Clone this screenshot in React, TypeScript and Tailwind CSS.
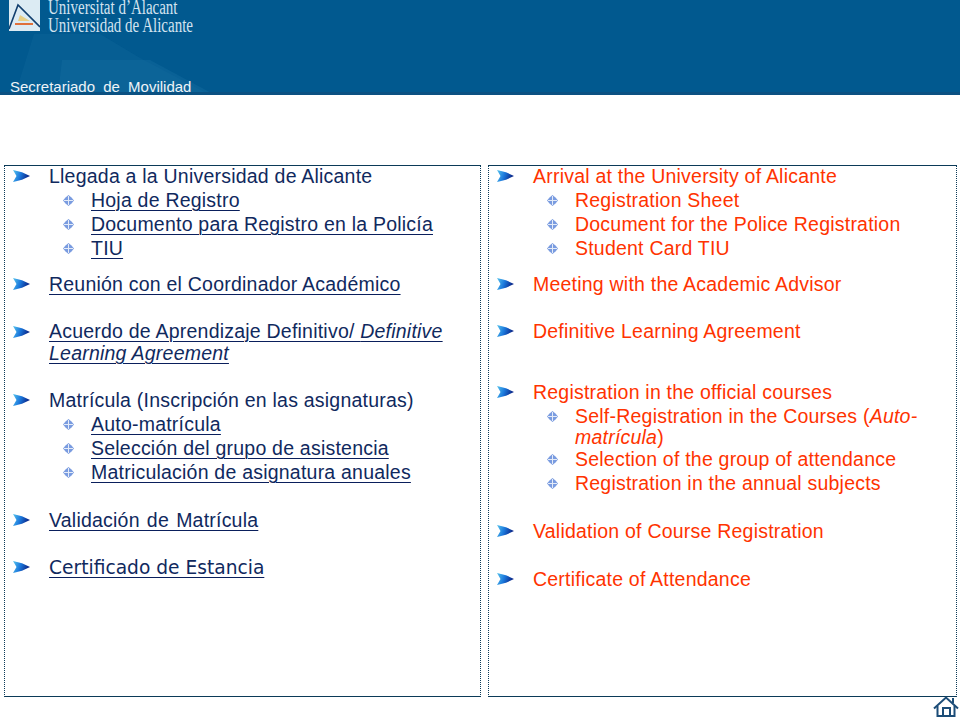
const Arrow = () => (
  <svg width="17" height="12" viewBox="0 0 17 12" className="shrink-0">
    <defs>
      <linearGradient id="ag" x1="0" y1="0" x2="1" y2="0.25">
        <stop offset="0" stopColor="#58c6ee" />
        <stop offset="0.5" stopColor="#1b78dc" />
        <stop offset="1" stopColor="#0a2486" />
      </linearGradient>
    </defs>
    <path d="M0 0 L9 2.2 L17 6 L9 9.8 L0 12 L3.5 6 Z" fill="url(#ag)" />
  </svg>
);

const Sub = () => (
  <svg width="11" height="11" viewBox="0 0 11 11" className="shrink-0">
    <path d="M5.5 0 L8.5 2.5 L11 5.5 L8.5 8.5 L5.5 11 L2.5 8.5 L0 5.5 L2.5 2.5 Z" fill="#7a9ce0" />
    <path d="M5.5 1 V10 M1 5.5 H10" stroke="#e4ebf8" strokeWidth="1" />
  </svg>
);

const L = ({ children }: { children: React.ReactNode }) => (
  <span className="underline underline-offset-[3px] decoration-1 decoration-[#0a1f5c]">{children}</span>
);

const Main = ({ children, className = "" }: { children: React.ReactNode; className?: string }) => (
  <div className={"flex items-start " + className}>
    <div className="w-[44px] pl-[8px] pt-[6px]"><Arrow /></div>
    <div className="flex-1 min-w-0 pr-[10px]">{children}</div>
  </div>
);

const SubRow = ({ children, className = "" }: { children: React.ReactNode; className?: string }) => (
  <div className={"flex items-start " + className}>
    <div className="w-[86px] pl-[58px] pt-[7px]"><Sub /></div>
    <div className="flex-1 min-w-0 pr-[10px]">{children}</div>
  </div>
);

export default function App() {
  return (
    <div className="w-[960px] h-[720px] bg-white overflow-hidden font-['Liberation_Sans',Arial,sans-serif] text-[19.5px] tracking-[0.22px] leading-6">
      <header className="h-[95px] relative overflow-hidden bg-[#00588f] tracking-normal">
        <svg className="absolute inset-0" width="960" height="95" viewBox="0 0 960 95">
          <rect width="960" height="95" fill="#01598f" />
          <path d="M15 95 L34 34 L100 34 L140 58 L210 95 Z" fill="#0b6398" opacity="0.55" />
          <path d="M58 95 L62 60 H150 L215 95 Z" fill="#1a6fa2" opacity="0.35" />
          <rect y="92" width="960" height="3" fill="#0b5182" />
        </svg>
        <div className="relative flex items-start pl-[9px]">
          <svg width="31" height="31" viewBox="0 0 31 31" className="shrink-0">
            <rect width="31" height="31" fill="#dcebf3" />
            <path d="M0 29 L9 5 L31 27" fill="none" stroke="#123f6e" strokeWidth="1.6" />
            <path d="M6 23 H24 V25 H6 Z" fill="#e0703a" />
            <path d="M11 15 L21 21 H9 Z" fill="#e8cf85" />
          </svg>
          <div className="ml-[8px] -mt-[2px] font-['Liberation_Serif',serif] text-[20px] leading-[18px] text-[#d3e3ef] origin-left scale-x-[0.75] whitespace-nowrap">
            <div>Universitat d’Alacant</div>
            <div>Universidad de Alicante</div>
          </div>
        </div>
        <div className="absolute left-[10px] top-[79px] text-[15px] leading-4 text-[#eef3f7] [word-spacing:4px]">Secretariado de Movilidad</div>
      </header>

      <main className="flex pl-[4px] pt-[70px] gap-[7px]">
        <section className="w-[477px] h-[532px] border border-[#0b3a58] text-[#10295e] [border-left-style:dotted] [border-right-style:dotted]">
          <div className="-mt-[2px]">
            <Main>Llegada a la Universidad de Alicante</Main>
            <SubRow><L>Hoja de Registro</L></SubRow>
            <SubRow><L>Documento para Registro en la Policía</L></SubRow>
            <SubRow><L>TIU</L></SubRow>
            <Main className="mt-3"><L>Reunión con el Coordinador Académico</L></Main>
            <Main className="mt-[24px]"><div className="leading-[22px]"><L>Acuerdo de Aprendizaje Definitivo/ <i>Definitive Learning Agreement</i></L></div></Main>
            <Main className="mt-[24px]">Matrícula (Inscripción en las asignaturas)</Main>
            <SubRow><L>Auto-matrícula</L></SubRow>
            <SubRow><L>Selección del grupo de asistencia</L></SubRow>
            <SubRow><L>Matriculación de asignatura anuales</L></SubRow>
            <Main className="mt-[24px]"><span className="[word-spacing:1.5px]"><L>Validación de Matrícula</L></span></Main>
            <Main className="mt-[23px]"><span className="font-['DejaVu_Sans',sans-serif] text-[18.65px] tracking-normal"><L>Certificado de Estancia</L></span></Main>
          </div>
        </section>
        <section className="w-[469px] h-[532px] border border-[#0b3a58] text-[#ff3300] [border-left-style:dotted] [border-right-style:dotted]">
          <div className="-mt-[2px]">
            <Main>Arrival at the University of Alicante</Main>
            <SubRow>Registration Sheet</SubRow>
            <SubRow>Document for the Police Registration</SubRow>
            <SubRow>Student Card TIU</SubRow>
            <Main className="mt-3">Meeting with the Academic Advisor</Main>
            <Main className="mt-[23px]">Definitive Learning Agreement</Main>
            <Main className="mt-[37px]">Registration in the official courses</Main>
            <SubRow className="-mb-[1px]"><div className="leading-[21px] pt-[2px]">Self-Registration in the Courses (<i>Auto-matrícula</i>)</div></SubRow>
            <SubRow>Selection of the group of attendance</SubRow>
            <SubRow>Registration in the annual subjects</SubRow>
            <Main className="mt-[24px]">Validation of Course Registration</Main>
            <Main className="mt-[24px]">Certificate of Attendance</Main>
          </div>
        </section>
      </main>

      <div className="flex justify-end pr-[1px]">
        <svg width="26" height="21" viewBox="0 0 26 21" fill="none" stroke="#1c4d78" strokeWidth="2" className="-mt-[1px] relative">
          <path d="M1 12.5 L13 1.5 L25 12.5" />
          <path d="M4.5 10 V20 H21.5 V10" />
          <path d="M10 20 V12 H17 V20" />
          <path d="M20 2 V7" />
        </svg>
      </div>
    </div>
  );
}
